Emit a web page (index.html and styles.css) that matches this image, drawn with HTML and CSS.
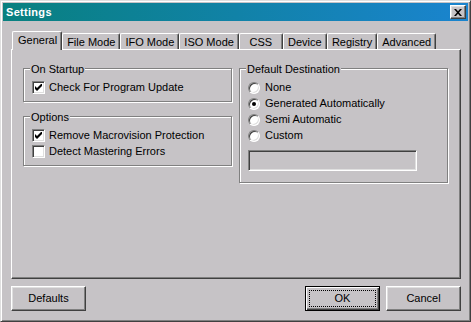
FILE: index.html
```html
<!DOCTYPE html>
<html lang="en">
<head>
  <meta charset="UTF-8">
  <title>Settings</title>
  <link rel="stylesheet" href="styles.css">
</head>
<body>
  <div class="window">
    <div class="titlebar">
      <span class="title">Settings</span>
      <button class="close" aria-label="Close">
        <svg width="8" height="7" viewBox="0 0 8 7"><path d="M0 0h2l2 2.3 2-2.3h2L5 3.5 8 7H6L4 4.7 2 7H0l3-3.5z" fill="#000"/></svg>
      </button>
    </div>

    <div class="tabs">
      <div class="tab active">General</div>
      <div class="tab">File Mode</div>
      <div class="tab">IFO Mode</div>
      <div class="tab">ISO Mode</div>
      <div class="tab">CSS</div>
      <div class="tab">Device</div>
      <div class="tab">Registry</div>
      <div class="tab">Advanced</div>
    </div>

    <div class="panel">
      <div class="col">
        <div class="group">
          <div class="group-title"><span>On Startup</span></div>
          <div class="row"><span class="check on"><svg width="7" height="7" viewBox="0 0 7 7"><polygon points="0,2 2,4 7,-1 7,2 2,7 0,5" fill="#000"/></svg></span>Check For Program Update</div>
        </div>
        <div class="group">
          <div class="group-title"><span>Options</span></div>
          <div class="row"><span class="check on"><svg width="7" height="7" viewBox="0 0 7 7"><polygon points="0,2 2,4 7,-1 7,2 2,7 0,5" fill="#000"/></svg></span>Remove Macrovision Protection</div>
          <div class="row"><span class="check"></span>Detect Mastering Errors</div>
        </div>
      </div>

      <div class="col">
        <div class="group dest">
          <div class="group-title"><span>Default Destination</span></div>
          <div class="row"><span class="radio"></span>None</div>
          <div class="row"><span class="radio on"></span>Generated Automatically</div>
          <div class="row"><span class="radio"></span>Semi Automatic</div>
          <div class="row"><span class="radio"></span>Custom</div>
          <div class="field"></div>
        </div>
      </div>
    </div>

    <div class="buttons">
      <button class="btn">Defaults</button>
      <span class="spacer"></span>
      <button class="btn default"><span class="focus">OK</span></button>
      <button class="btn">Cancel</button>
    </div>
  </div>
</body>
</html>
```

FILE: styles.css
```css
body {
  margin: 0;
  background: #c6c3c6;
  font: 11px/13px "Liberation Sans", Arial, sans-serif;
  color: #000;
}

.window {
  width: 471px;
  height: 322px;
  box-sizing: border-box;
  padding: 2px;
  background: #c6c3c6;
  border: 1px solid;
  border-color: #dfdfdf #404040 #404040 #dfdfdf;
  box-shadow: inset 1px 1px #fff, inset -1px -1px #808080;
}

.titlebar {
  height: 18px;
  display: flex;
  align-items: center;
  justify-content: space-between;
  padding: 0 2px 0 3px;
  background: linear-gradient(to right, #08807f, #1a84cf);
  color: #fff;
  font-weight: bold;
  line-height: 18px;
  letter-spacing: 0.3px;
}

.close {
  width: 16px;
  height: 14px;
  padding: 0;
  display: flex;
  align-items: center;
  justify-content: center;
  background: #c6c3c6;
  border: 1px solid;
  border-color: #fff #404040 #404040 #fff;
  box-shadow: inset -1px -1px #808080, inset 1px 1px #dfdfdf;
}

/* tab strip */
.tabs {
  display: flex;
  align-items: flex-end;
  height: 18px;
  margin: 10px 7px 0 8px;
  padding-left: 3px;
}

.tab {
  box-sizing: border-box;
  height: 16px;
  min-width: 44px;
  padding: 2px 4px 0;
  border: 1px solid #fff;
  border-right-color: #404040;
  border-bottom: 0;
  border-radius: 2px 2px 0 0;
  box-shadow: inset -1px 0 #808080;
  text-align: center;
  white-space: nowrap;
}

.tab.active {
  position: relative;
  z-index: 1;
  height: 19px;
  margin: 0 0 -1px -2px;
  padding-left: 5px;
  background: #c6c3c6;
}

.panel {
  height: 230px;
  box-sizing: border-box;
  margin: 0 7px 0 8px;
  padding: 18px 0 0 11px;
  display: flex;
  gap: 7px;
  border: 1px solid;
  border-color: #fff #404040 #404040 #fff;
  box-shadow: inset -1px -1px #808080;
}

.col {
  width: 209px;
  display: flex;
  flex-direction: column;
  gap: 14px;
}

/* group boxes */
.group {
  padding: 0 8px 6px;
  border: 1px solid #808080;
  box-shadow: 1px 1px #fff, inset 1px 1px #fff;
}

.group.dest {
  padding-bottom: 11px;
}

.group-title {
  height: 13px;
  margin: -6px 0 3px -2px;
}

.group-title span {
  padding: 0 1px;
  background: #c6c3c6;
}

.row {
  display: flex;
  align-items: flex-start;
  gap: 4px;
  height: 16px;
  line-height: 16px;
}

.check {
  width: 13px;
  height: 13px;
  margin-top: 2px;
  box-sizing: border-box;
  display: flex;
  align-items: center;
  justify-content: center;
  background: #fff;
  border: 1px solid;
  border-color: #808080 #fff #fff #808080;
  box-shadow: inset 1px 1px #404040, inset -1px -1px #dfdfdf;
}

.radio {
  width: 12px;
  height: 12px;
  margin: 3px 1px 0 0;
  box-sizing: border-box;
  display: flex;
  align-items: center;
  justify-content: center;
  border-radius: 50%;
  background: #fff;
  border: 1px solid;
  border-color: #808080 #fff #fff #808080;
  box-shadow: inset 1px 1px #404040, inset -1px -1px #dfdfdf;
}

.radio.on::after {
  content: "";
  width: 4px;
  height: 4px;
  border-radius: 50%;
  background: #000;
}

.field {
  width: 169px;
  height: 21px;
  margin-top: 7px;
  box-sizing: border-box;
  border: 1px solid;
  border-color: #808080 #fff #fff #808080;
  box-shadow: inset 1px 1px #404040, inset -1px -1px #dfdfdf;
}

/* bottom buttons */
.buttons {
  display: flex;
  gap: 6px;
  margin: 7px 7px 0 8px;
}

.spacer {
  flex: 1;
}

.btn {
  width: 75px;
  height: 25px;
  padding: 0;
  font: inherit;
  color: #000;
  background: #c6c3c6;
  border: 1px solid;
  border-color: #fff #404040 #404040 #fff;
  box-shadow: inset -1px -1px #808080, inset 1px 1px #dfdfdf;
}

.btn.default {
  padding: 3px;
  border-color: #000;
  box-shadow: inset 1px 1px #fff, inset -1px -1px #404040, inset -2px -2px #808080;
}

.focus {
  height: 100%;
  box-sizing: border-box;
  display: flex;
  align-items: center;
  justify-content: center;
  border: 1px dotted #000;
}
```
